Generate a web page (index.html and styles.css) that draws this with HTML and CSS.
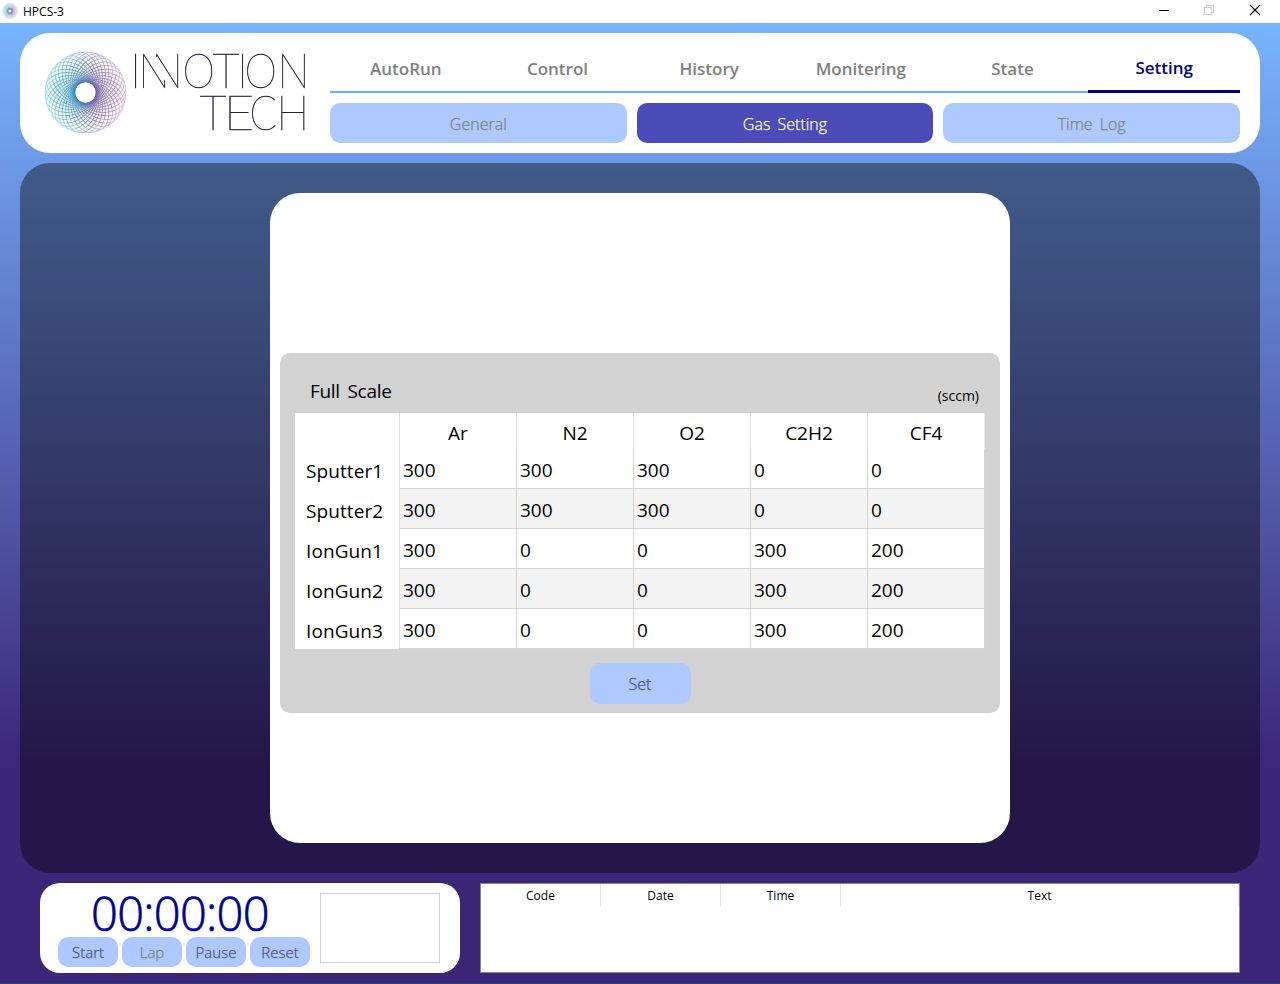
FILE: index.html
```html
<!DOCTYPE html>
<html lang="en">
<head>
<meta charset="utf-8">
<title>HPCS-3</title>
<link rel="stylesheet" href="styles.css">
</head>
<body>
<div class="titlebar">
  <svg class="app-icon" viewBox="44 51 83 83"><use href="#ring"/></svg>
  <span class="app-name">HPCS-3</span>
  <svg class="win-controls" width="110" height="22" viewBox="0 0 110 22" fill="none" shape-rendering="crispEdges">
    <path d="M4 10.500h10" stroke="#000"/>
    <path d="M49.500 7.500h7v7h-7zM51.500 7.500v-2h7v7h-2" stroke="#ccc"/>
    <path d="M95 5l10 10M105 5l-10 10" stroke="#000" shape-rendering="auto" stroke-width="1.100"/>
  </svg>
</div>
<div class="app">
  <header class="header">
    <svg class="logo" width="290" height="100" viewBox="30 43 290 100">
      <defs>
        <linearGradient id="hue" gradientUnits="userSpaceOnUse" x1="45" y1="0" x2="126" y2="0">
          <stop offset="0" stop-color="#22bcd4"/><stop offset=".35" stop-color="#3d90c0"/><stop offset=".62" stop-color="#7564aa"/><stop offset="1" stop-color="#b66fb8"/>
        </linearGradient>
        <radialGradient id="fade" gradientUnits="userSpaceOnUse" cx="85.500" cy="92.500" r="41">
          <stop offset=".3" stop-color="#fff" stop-opacity=".65"/><stop offset=".7" stop-color="#fff" stop-opacity=".7"/><stop offset="1" stop-color="#fff" stop-opacity=".3"/>
        </radialGradient>
        <mask id="web" maskUnits="userSpaceOnUse" x="40" y="48" width="90" height="90">
          <g id="r36"><g id="r18"><g id="r9">
            <ellipse id="loop" cx="100.300" cy="92.500" rx="25.700" ry="17" fill="none" stroke="url(#fade)" stroke-width="1"/>
            <use href="#loop" transform="rotate(10 85.500 92.500)"/>
            <use href="#loop" transform="rotate(20 85.500 92.500)"/>
            <use href="#loop" transform="rotate(30 85.500 92.500)"/>
            <use href="#loop" transform="rotate(40 85.500 92.500)"/>
            <use href="#loop" transform="rotate(50 85.500 92.500)"/>
            <use href="#loop" transform="rotate(60 85.500 92.500)"/>
            <use href="#loop" transform="rotate(70 85.500 92.500)"/>
            <use href="#loop" transform="rotate(80 85.500 92.500)"/></g>
            <use href="#r9" transform="rotate(90 85.500 92.500)"/></g>
            <use href="#r18" transform="rotate(180 85.500 92.500)"/></g>
        </mask>
        <clipPath id="n1"><path d="M141 50h3.500L170 88.500h-29z"/></clipPath>
        <clipPath id="n2"><path d="M152 50h32v38.500h-7z"/></clipPath>
      </defs>
      <g id="ring"><rect x="40" y="48" width="90" height="90" fill="url(#hue)" mask="url(#web)"/></g>
      <g class="wordmark">
        <text transform="translate(129.700 87.500)">I</text>
        <g clip-path="url(#n1)"><text transform="translate(138.500 87.500) scale(.88 1)">N</text></g>
        <g clip-path="url(#n2)"><text transform="translate(151.500 87.500) scale(.88 1)">N</text></g>
        <text transform="translate(182.500 87.500) scale(.87 1)">O</text>
        <text transform="translate(212.500 87.500)">T</text>
        <text transform="translate(236.700 87.500)">I</text>
        <text transform="translate(244.500 87.500) scale(.87 1)">O</text>
        <text transform="translate(277.500 87.500) scale(.9 1)">N</text>
        <text transform="translate(199.500 130)">T</text>
        <text transform="translate(223.500 130) scale(1.120 1)">E</text>
        <text transform="translate(249.500 130) scale(.85 1)">C</text>
        <text transform="translate(276.500 130) scale(.92 1)">H</text>
      </g>
    </svg>
    <div class="nav">
      <nav class="tabs">
        <a class="tab">AutoRun</a><a class="tab">Control</a><a class="tab">History</a><a class="tab">Monitering</a><a class="tab">State</a><a class="tab active">Setting</a>
      </nav>
      <div class="subtabs">
        <button class="btn sub">General</button><button class="btn sub selected">Gas Setting</button><button class="btn sub">Time Log</button>
      </div>
    </div>
  </header>
  <main class="stage">
    <section class="card">
      <div class="panel">
        <div class="panel-head"><span class="panel-title">Full Scale</span><span class="unit">(sccm)</span></div>
        <div class="grid">
          <div class="rowhead"></div><div class="colhead">Ar</div><div class="colhead">N2</div><div class="colhead">O2</div><div class="colhead">C2H2</div><div class="colhead">CF4</div>
          <div class="rowhead">Sputter1</div><div class="cell">300</div><div class="cell">300</div><div class="cell">300</div><div class="cell">0</div><div class="cell">0</div>
          <div class="rowhead">Sputter2</div><div class="cell alt">300</div><div class="cell alt">300</div><div class="cell alt">300</div><div class="cell alt">0</div><div class="cell alt">0</div>
          <div class="rowhead">IonGun1</div><div class="cell">300</div><div class="cell">0</div><div class="cell">0</div><div class="cell">300</div><div class="cell">200</div>
          <div class="rowhead">IonGun2</div><div class="cell alt">300</div><div class="cell alt">0</div><div class="cell alt">0</div><div class="cell alt">300</div><div class="cell alt">200</div>
          <div class="rowhead">IonGun3</div><div class="cell">300</div><div class="cell">0</div><div class="cell">0</div><div class="cell">300</div><div class="cell">200</div>
        </div>
        <button class="btn set">Set</button>
      </div>
    </section>
  </main>
  <footer class="footer">
    <section class="timer">
      <div class="clock-col">
        <div class="clock">00:00:00</div>
        <div class="clock-btns"><button class="btn small">Start</button><button class="btn small off">Lap</button><button class="btn small">Pause</button><button class="btn small">Reset</button></div>
      </div>
      <div class="laps"></div>
    </section>
    <section class="log"><div class="log-head"><span>Code</span><span>Date</span><span>Time</span><span>Text</span></div></section>
  </footer>
</div>
</body>
</html>
```
FILE: styles.css
```css
* { box-sizing: border-box; }
body { margin: 0; width: 1280px; height: 984px; overflow: hidden; display: flex; flex-direction: column; background: #fff; color: #000; font-family: "Open Sans", "Noto Sans", sans-serif; }
.titlebar { height: 23px; flex: none; display: flex; align-items: center; padding-left: 2px; background: #fff; }
.app-icon { width: 16px; height: 16px; margin-top: -2px; }
.app-name { flex: 1; margin-left: 5px; font-size: 12px; line-height: 22px; }
.win-controls { margin-right: 15px; align-self: flex-start; }
.app { flex: 1; display: flex; flex-direction: column; gap: 10px; padding: 10px 20px; background: linear-gradient(#78b4ff 0, #3c2678 742px); border-bottom: 1px solid #214063; }
.header { height: 120px; flex: none; display: flex; padding: 10px 20px 10px 10px; gap: 10px; border-radius: 30px; background: #fff; }
.logo { flex: none; }
.wordmark { font-family: Lato, sans-serif; font-weight: 100; font-size: 47.500px; fill: #1b1830; stroke: #1b1830; stroke-width: .5px; opacity: .95; }
.nav { flex: 1; display: flex; flex-direction: column; gap: 10px; }
.tabs { height: 50px; display: grid; grid-template-columns: repeat(6, 1fr); }
.tab { height: 50px; border-bottom: 2px solid #67aef8; color: #808080; font-size: 17px; font-weight: 600; text-align: center; line-height: 52px; }
.tab.active { border-bottom: 3px solid #000080; color: #000080; line-height: 50px; }
.subtabs { display: grid; grid-template-columns: repeat(3, 1fr); gap: 10px; }
.btn { border: 0; padding: 0; border-radius: 10px; background: #aec9ff; color: #4b4b8c; font-family: inherit; font-weight: 300; font-size: 16px; word-spacing: 3px; -webkit-text-stroke: .25px currentColor; }
.sub { height: 40px; color: #808080; padding-top: 2px; }
.sub.selected { background: #4c4cb9; color: #fff; }
.stage { height: 710px; flex: none; display: flex; justify-content: center; padding: 30px; border-radius: 30px; background: rgba(0, 0, 0, .4); }
.card { width: 740px; padding: 160px 10px 0; border-radius: 30px; background: #fff; }
.panel { width: 720px; height: 360px; display: flex; flex-direction: column; padding: 15px 15px 0; border-radius: 10px; background: #d2d2d2; }
.panel-head { height: 45px; flex: none; display: flex; justify-content: space-between; padding: 0 6px 0 15px; }
.panel-title { font-size: 19px; line-height: 46px; word-spacing: 3px; letter-spacing: -.3px; }
.unit { font-size: 14px; line-height: 56px; }
.grid { flex: none; display: grid; grid-template-columns: 105px repeat(5, 117px); grid-template-rows: 36px repeat(5, 40px); font-size: 19px; }
.rowhead { background: #fff; border-right: 1px solid #dadada; padding-left: 11px; line-height: 44px; letter-spacing: .1px; }
.colhead { background: #fff; border-right: 1px solid #e5e5e5; text-align: center; line-height: 40px; }
.cell { background: #fff; border-right: 1px solid #d4d4d4; border-bottom: 1px solid #d4d4d4; padding-left: 3px; line-height: 42px; }
.alt { background: #f4f4f4; }
.set { width: 101px; height: 41px; flex: none; align-self: center; margin-top: 14px; padding-top: 1px; }
.footer { height: 90px; display: flex; gap: 20px; padding: 0 20px; }
.timer { width: 420px; display: flex; gap: 10px; padding: 10px 20px 0 18px; border-radius: 20px; background: #fff; }
.clock-col { width: 252px; }
.clock { height: 44px; color: #000096; font-size: 47px; font-weight: 300; line-height: 40px; letter-spacing: -.7px; text-align: center; padding-right: 8px; -webkit-text-stroke: .7px #000096; }
.clock-btns { display: grid; grid-template-columns: repeat(4, 60px); gap: 4px; }
.small { height: 30px; font-size: 15px; }
.off { color: #808080; }
.laps { width: 120px; height: 70px; border: 1px solid #d2d2d2; }
.log { width: 760px; border: 1px solid #828790; background: #fff; }
.log-head { display: grid; grid-template-columns: repeat(3, 120px) 1fr; height: 23px; font-size: 12px; line-height: 24px; text-align: center; }
.log-head span { height: 23px; border-right: 1px solid #e5e5e5; }
```
